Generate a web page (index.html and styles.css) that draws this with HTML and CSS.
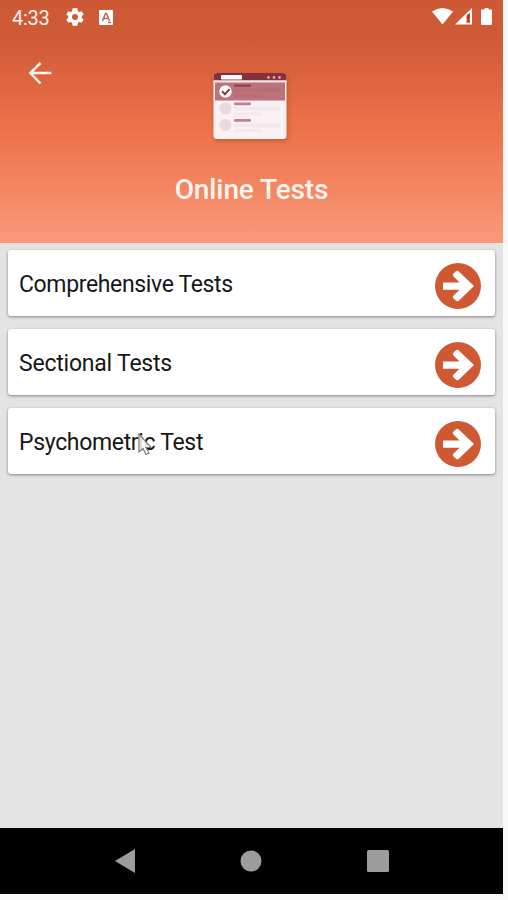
FILE: index.html
```html
<!DOCTYPE html>
<html lang="en">
<head>
<meta charset="utf-8">
<title>Online Tests</title>
<link rel="stylesheet" href="styles.css">
</head>
<body>
<div class="phone">
  <header class="hero">
    <div class="status">
      <span class="clock">4:33</span>
      <svg class="gear" width="20" height="20" viewBox="1 1 22 22"><path fill="#fff" fill-rule="evenodd" d="M19.400 13a7.500 7.500 0 0 0 0-2l2.200-1.700-2.200-3.700-2.600 1a8 8 0 0 0-1.700-1L14.700 2.500H9.300l-.4 3.100a8 8 0 0 0-1.700 1l-2.600-1-2.200 3.700L4.600 11a7.500 7.500 0 0 0 0 2l-2.200 1.700 2.200 3.700 2.600-1a8 8 0 0 0 1.700 1l.4 3.100h5.400l.4-3.100a8 8 0 0 0 1.700-1l2.600 1 2.200-3.700zM12 15.300a3.300 3.300 0 1 1 0-6.600 3.300 3.300 0 0 1 0 6.600z"/></svg>
      <svg class="app" width="14" height="15" viewBox="0 0 14 15"><rect width="14" height="15" rx="1" fill="#fff"/><path d="M3.500 11 6.500 3.500h1L10.500 11M4.700 8.500h4.600M9 12.500h3" fill="none" stroke="#bd6650" stroke-width="1.500"/></svg>
      <svg class="signals" width="63" height="20" viewBox="0 0 63 20"><path fill="#fff" d="M0 4.500Q10.500-2.500 21 4.500L10.500 17.500z"/><path fill="#fff" fill-rule="evenodd" d="M23 17.500 40 1v16.500zM34.500 8.500v7.300H38V5.500z"/><path fill="#a92a1c" d="M35.500 7.500h1.800v4.500h-1.800zM35.500 13.300h1.800V15h-1.800z"/><path fill="#fff" d="M52.500 1h4v1.500H59q1 0 1 1V17q0 1-1 1h-9q-1 0-1-1V3.500q0-1 1-1h2.500z"/></svg>
    </div>
    <svg class="back" width="24" height="24" viewBox="0 0 24 24"><path d="M23.300 12H2.500M12.500 2 2.400 12 12.500 22.500" fill="none" stroke="#fff4ee" stroke-width="2.500"/></svg>
    <svg class="art" width="74" height="70" viewBox="0 0 74 70">
      <defs><clipPath id="win"><rect x="0.500" y="0" width="73" height="66" rx="3.500"/></clipPath></defs>
      <g clip-path="url(#win)">
        <path fill="#fbf1f3" d="M0 0h74v66H0z"/>
        <path fill="#85303c" d="M0 0h74v7.500H0z"/>
        <rect x="8" y="2" width="21" height="4.500" rx="1" fill="#fff"/>
        <g fill="#d9a5a8"><circle cx="55.500" cy="4.500" r="1.400"/><circle cx="61" cy="4.500" r="1.400"/><circle cx="66.500" cy="4.500" r="1.400"/></g>
        <path fill="#f6e3e6" d="M0 7.500h74V9.500H0z"/>
        <path fill="#bd737c" d="M2 9.500h70v18H2z"/>
        <path fill="#b3636f" d="M21 15.500h46V19H21zM21 21h28v3H21z" opacity=".4"/>
        <path fill="#963f51" d="M21 11.500h17v2.200H21z"/>
        <circle cx="12.500" cy="18.500" r="6.200" fill="#fff"/>
        <path d="m9 18.200 3 3 4.500-5" fill="none" stroke="#8c3646" stroke-width="2"/>
        <g fill="#ecd8df"><circle cx="12.500" cy="35.500" r="6"/><circle cx="12.500" cy="52" r="6"/></g>
        <g fill="#bd8192"><rect x="21" y="29.500" width="17" height="2.700" rx="1"/><rect x="21" y="46" width="17" height="2.700" rx="1"/></g>
        <g fill="#f5e8ec"><path d="M21 34h46v3.500H21zM21 39.500h28v3H21zM21 50.500h46V54H21zM21 56h28v3H21z"/></g>
      </g>
    </svg>
    <h1 class="title">Online Tests</h1>
  </header>
  <main class="list">
    <div class="card"><span class="label comprehensive">Comprehensive Tests</span><svg class="go" viewBox="0 0 46 46"><circle cx="23" cy="23" r="23" fill="#cf5932"/><path d="M8 19.500h16.500L18.300 13.300q-1-1.500.2-2.800l2.500-2.300q1.500-1 2.800.2L39 23 23.800 37.800q-1.300 1-2.800 0l-2.500-2.300q-1.200-1.500-.2-2.800l6.200-5.900H8z" fill="#fff"/></svg></div>
    <div class="card"><span class="label sectional">Sectional Tests</span><svg class="go" viewBox="0 0 46 46"><circle cx="23" cy="23" r="23" fill="#cf5932"/><path d="M8 19.500h16.500L18.300 13.300q-1-1.500.2-2.800l2.500-2.300q1.500-1 2.800.2L39 23 23.800 37.800q-1.300 1-2.800 0l-2.500-2.300q-1.200-1.500-.2-2.800l6.200-5.900H8z" fill="#fff"/></svg></div>
    <div class="card"><span class="label psychometric">Psychometric Test</span><svg class="go" viewBox="0 0 46 46"><circle cx="23" cy="23" r="23" fill="#cf5932"/><path d="M8 19.500h16.500L18.300 13.300q-1-1.500.2-2.800l2.500-2.300q1.500-1 2.800.2L39 23 23.800 37.800q-1.300 1-2.800 0l-2.500-2.300q-1.200-1.500-.2-2.800l6.200-5.900H8z" fill="#fff"/></svg>
      <svg class="pointer" width="14" height="23" viewBox="0 0 14 23"><path d="M1 1v18l4-3.500 3 6 3-1.500-3-5.500h5z" fill="#fff" fill-opacity=".85" stroke="#777" stroke-width="1.200"/></svg></div>
  </main>
  <nav class="navbar">
    <svg width="20" height="24" viewBox="0 0 20 24"><path fill="#9c9c9c" d="M20 0v24L0 12z"/></svg>
    <svg width="22" height="22" viewBox="0 0 22 22"><circle cx="11" cy="11" r="10.500" fill="#9c9c9c"/></svg>
    <svg width="22" height="22" viewBox="0 0 22 22"><rect width="22" height="22" rx="1.500" fill="#9c9c9c"/></svg>
  </nav>
</div>
</body>
</html>
```
FILE: styles.css
```css
* { box-sizing: border-box; }
body { margin: 0; background: #f8f8f8; font-family: Roboto, sans-serif; }
svg { display: block; flex: none; }
.phone { width: 503px; height: 894px; display: flex; flex-direction: column; background: #e4e4e4; }
.hero {
  height: 243px;
  display: grid;
  grid-template-columns: 80px 1fr 80px;
  grid-template-rows: 36px 106px 1fr;
  background: linear-gradient(#cd5935 0, #cf5a36 36px, #ee744a 135px, #f9997b 243px);
}
.status { grid-column: 1 / -1; display: flex; align-items: center; padding: 0 8px 2px 12px; }
.clock { width: 53px; font-size: 20px; line-height: 20px; letter-spacing: -0.3px; color: #fff4ee; padding-top: 2px; }
.app { margin-left: 14px; }
.signals { margin-left: auto; }
.back { grid-column: 1; margin: 25px 0 0 28px; }
.art { grid-column: 2; justify-self: center; margin: 37px 0 0 -3px; filter: drop-shadow(1px 2px 2px #9c3f2488); }
.title { grid-column: 1 / -1; grid-row: 3; margin: 31px 0 0; text-align: center; font-size: 28px; line-height: 34px; font-weight: 500; letter-spacing: -0.1px; color: #fff5ee; }
.list { flex: 1; display: flex; flex-direction: column; gap: 13px; padding: 7px 8px; }
.card {
  position: relative;
  height: 66px;
  display: flex;
  align-items: center;
  justify-content: space-between;
  padding: 0 14px 0 11px;
  background: #fff;
  border-radius: 3px;
  box-shadow: 0 1px 3px #00000070;
}
.label { padding-top: 4px; font-size: 23px; line-height: 28px; color: #171717; }
.comprehensive { letter-spacing: -0.36px; }
.sectional { letter-spacing: -0.22px; }
.psychometric { letter-spacing: -0.33px; }
.go { width: 46px; height: 46px; margin-top: 5px; }
.pointer { position: absolute; left: 130px; top: 25px; }
.navbar { height: 66px; display: flex; align-items: center; justify-content: space-between; padding: 0 114px 0 115px; background: #000; }
```
